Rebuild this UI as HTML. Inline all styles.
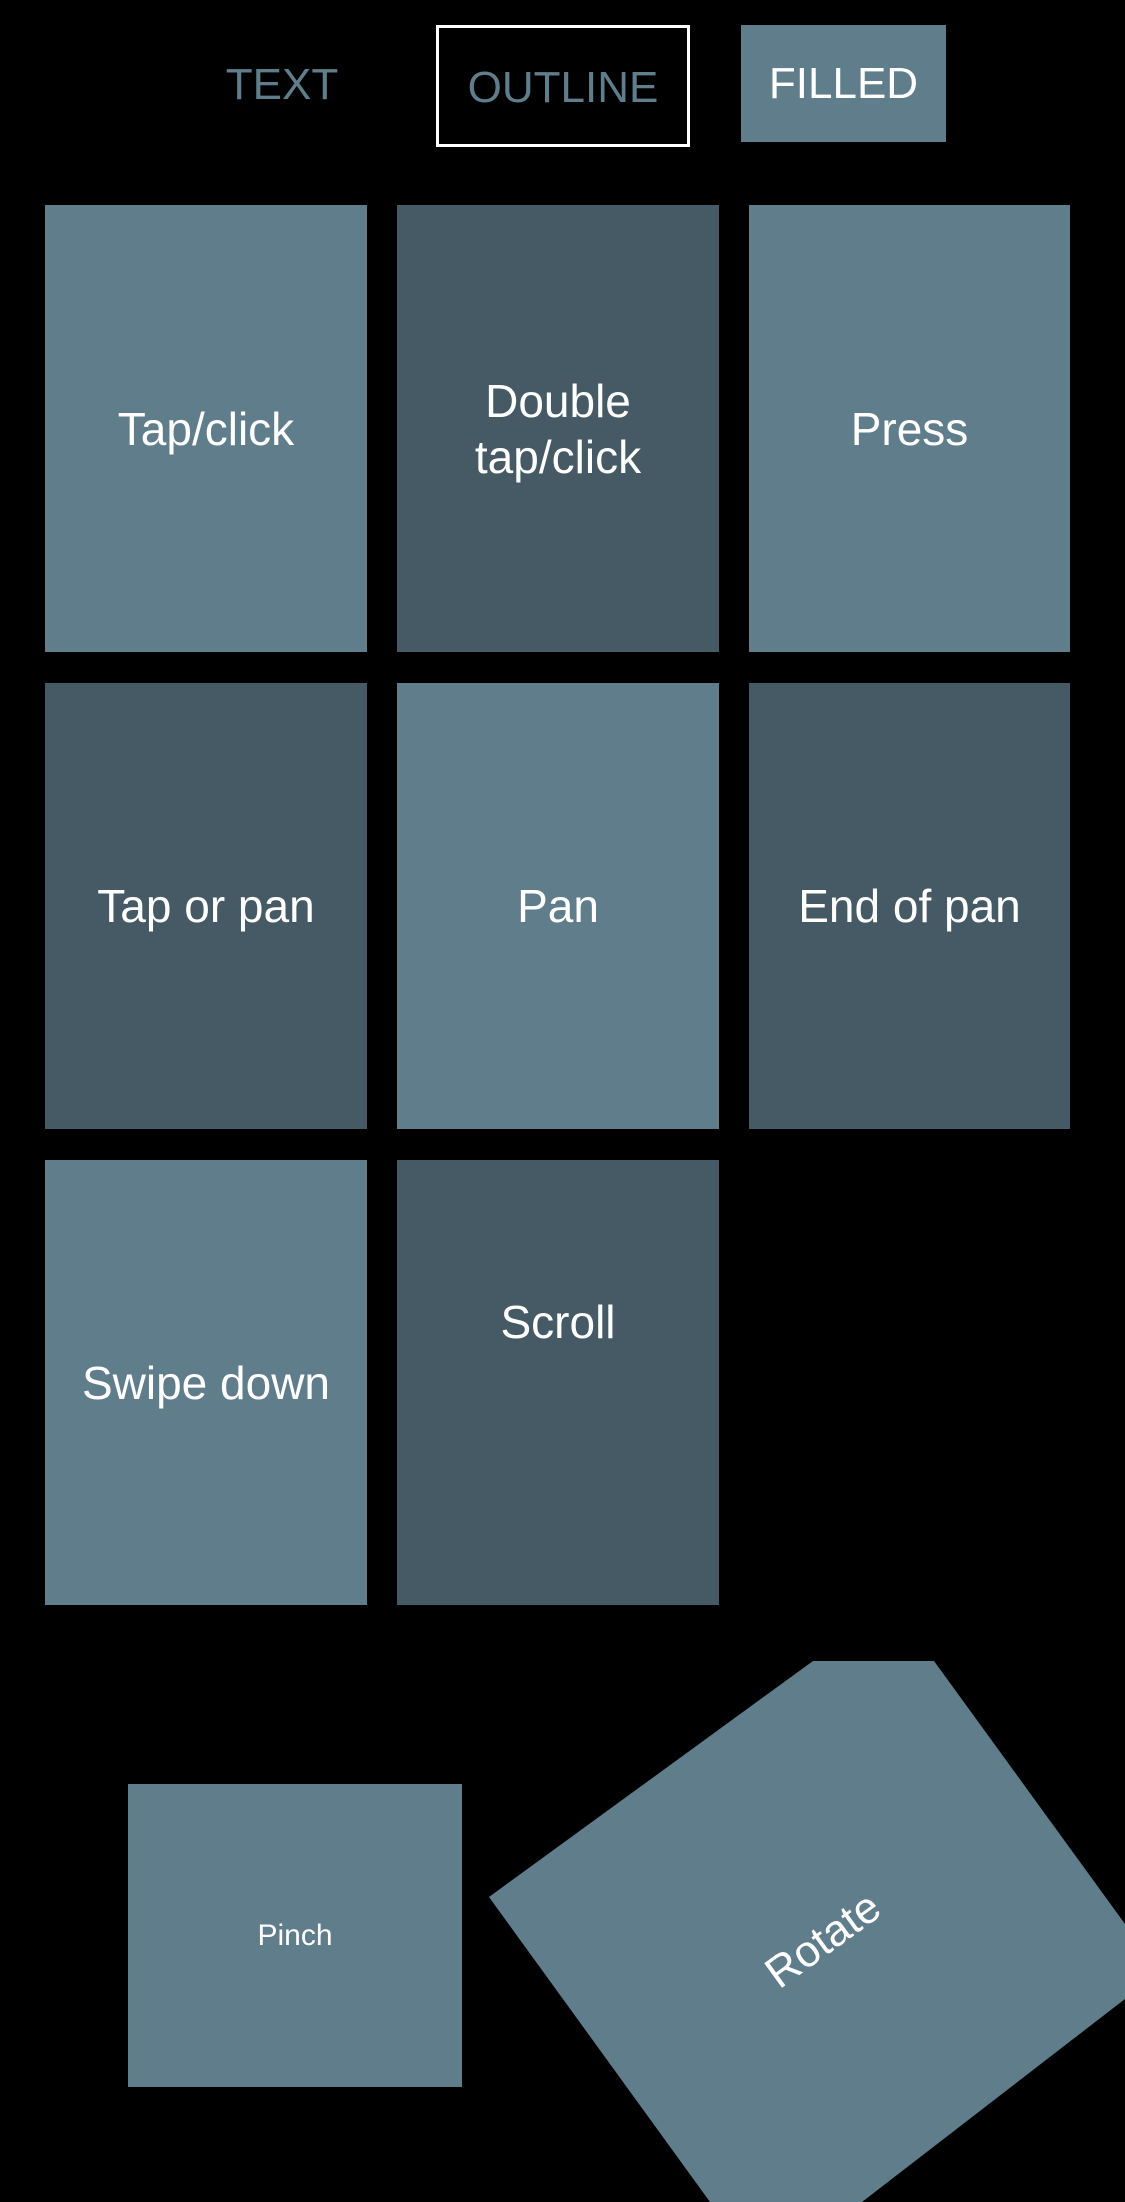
<!DOCTYPE html>
<html><head><style>
html,body{margin:0;padding:0;background:#000;width:1125px;height:2202px;overflow:hidden;font-family:"Liberation Sans",sans-serif;}
.a{position:absolute;box-sizing:border-box;}
.t{display:flex;align-items:center;justify-content:center;text-align:center;color:#fff;font-size:46px;line-height:56px;}
.l{background:#607d8b}.d{background:#455a64}
</style></head><body>
<div class="a t" style="left:227px;top:25px;width:110px;height:120px;color:#607d8b;font-size:44px;">TEXT</div>
<div class="a t" style="left:436px;top:25px;width:254px;height:122px;border:3px solid #fff;color:#607d8b;font-size:44px;padding-top:4px;">OUTLINE</div>
<div class="a t l" style="left:741px;top:25px;width:205px;height:117px;font-size:44px;">FILLED</div>

<div class="a t l" style="left:45px;top:205px;width:322px;height:447px;">Tap/click</div>
<div class="a t d" style="left:397px;top:205px;width:322px;height:447px;">Double<br>tap/click</div>
<div class="a t l" style="left:749px;top:205px;width:321px;height:447px;">Press</div>
<div class="a t d" style="left:45px;top:683px;width:322px;height:446px;">Tap or pan</div>
<div class="a t l" style="left:397px;top:683px;width:322px;height:446px;">Pan</div>
<div class="a t d" style="left:749px;top:683px;width:321px;height:446px;">End of pan</div>
<div class="a t l" style="left:45px;top:1160px;width:322px;height:445px;">Swipe down</div>
<div class="a t d" style="left:397px;top:1160px;width:322px;height:445px;align-items:flex-start;padding-top:134px;">Scroll</div>

<div class="a t l" style="left:128px;top:1784px;width:334px;height:303px;font-size:30px;">Pinch</div>

<svg class="a" style="left:0;top:0" width="1125" height="2202">
<polygon points="813,1661 934,1661 1125,1924 1125,1999 862,2202 710,2202 489,1897" fill="#607d8b"/>
<text x="823" y="1940" fill="#fff" font-family="Liberation Sans" font-size="44" text-anchor="middle" dominant-baseline="central" transform="rotate(-36 823 1940)">Rotate</text>
</svg>
</body></html>
